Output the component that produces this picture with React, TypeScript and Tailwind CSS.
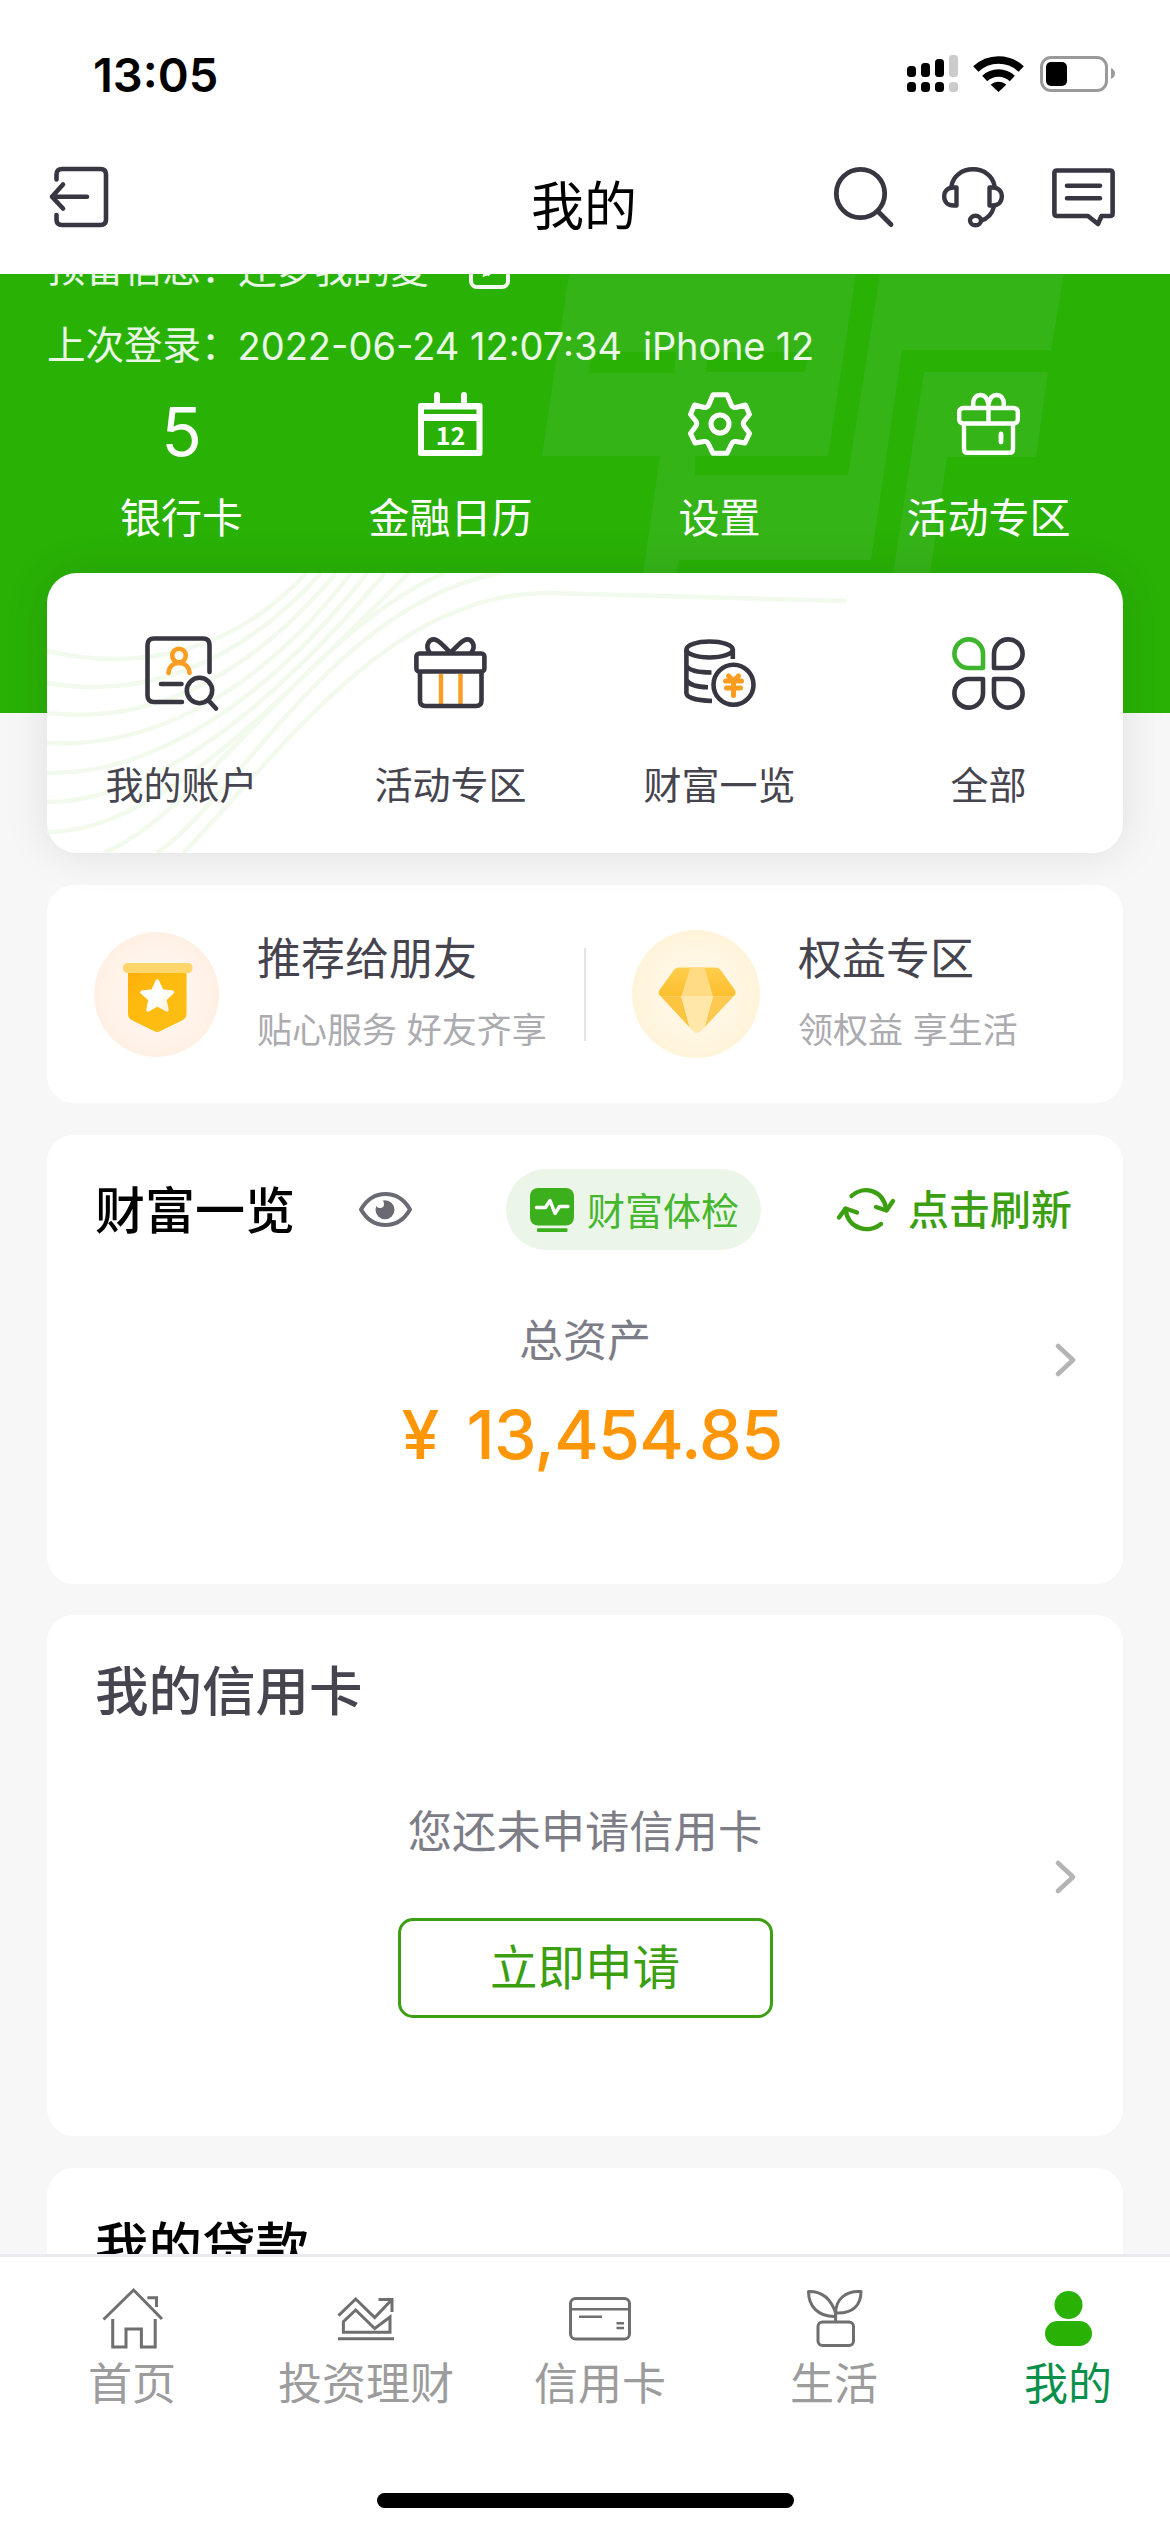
import React from 'react';

const ink = '#373641';
const orange = '#fa9d21';

function Svg({ w, h, children, stroke = 'none', sw = 5 }: { w: number; h: number; children: React.ReactNode; stroke?: string; sw?: number }) {
  return (
    <svg width={w} height={h} viewBox={`0 0 ${w} ${h}`} fill="none" stroke={stroke} strokeWidth={sw} strokeLinecap="round" strokeLinejoin="round" className="block shrink-0 overflow-visible">
      {children}
    </svg>
  );
}

/* Status bar and title bar icons */
const Signal = () => (
  <Svg w={51} h={38}>
    <g fill="#000">
      <rect x="0" y="11" width="9" height="11" rx="3.5" />
      <rect x="14" y="8" width="9" height="14" rx="3.5" />
      <rect x="28" y="4" width="9" height="18" rx="3.5" />
      <rect x="0" y="27" width="9" height="10" rx="3.5" />
      <rect x="14" y="27" width="9" height="10" rx="3.5" />
      <rect x="28" y="27" width="9" height="10" rx="3.5" />
    </g>
    <g fill="#cbcbcb">
      <rect x="42" y="0" width="9" height="22" rx="3.5" />
      <rect x="42" y="27" width="9" height="10" rx="3.5" />
    </g>
  </Svg>
);
const Wifi = () => (
  <svg width="49" height="36" viewBox="0 0 49 36" fill="none" stroke="#000" className="block overflow-visible">
    <path d="M1.8 13.1A33 33 0 0 1 47.2 13.1" strokeWidth="7.6" />
    <path d="M10.7 22.5A20 20 0 0 1 38.3 22.5" strokeWidth="7.4" />
    <path d="M24.5 36 16.7 28.8A11.3 11.3 0 0 1 32.3 28.8Z" fill="#000" stroke="none" />
  </svg>
);
const Battery = () => (
  <Svg w={75} h={36}>
    <rect x="1.5" y="1.5" width="65" height="33" rx="9.5" stroke="#9a9a9a" strokeWidth="3" />
    <rect x="6" y="6" width="21" height="24" rx="5" fill="#000" />
    <path d="M71 12Q75 14 75 17.500T71 23Z" fill="#9a9a9a" />
  </Svg>
);
const Logout = () => (
  <Svg w={60} h={62} stroke={ink} sw={4.6}>
    <path d="M7.500 13.500V8.500Q7.500 3 13 3H51.500Q57 3 57 8.500V53.500Q57 59 51.500 59H13Q7.500 59 7.500 53.500V49" />
    <path d="M38 30.700H3M14 18.500 3 30.700 14 42.500" />
  </Svg>
);
const Search = () => (
  <Svg w={60} h={60} stroke={ink} sw={4.8}>
    <circle cx="26.500" cy="26.500" r="24.200" />
    <path d="M44 44.500 57 57.500" />
  </Svg>
);
const Headset = () => (
  <Svg w={62} h={60} stroke={ink} sw={4.4}>
    <path d="M9.500 19C11 9 20 2.300 31 2.300S51 9 52.500 19" />
    <path d="M14.500 20.500V38.500H11.500C6 38.500 2.200 35 2.200 29.500S6 20.500 11.500 20.500Z" />
    <path d="M47.500 20.500V38.500H50.500C56 38.500 59.800 35 59.800 29.500S56 20.500 50.500 20.500Z" />
    <path d="M52 39.500Q49 51 39 53.500" />
    <ellipse cx="33.500" cy="53.500" rx="5.500" ry="4.800" />
  </Svg>
);
const Chat = () => (
  <Svg w={63} h={58} stroke={ink} sw={4.6}>
    <path d="M5 2.500H58Q60.600 2.500 60.600 5V45.500Q60.600 48 58 48H49.500L46 56 36 48H5Q2.400 48 2.400 45.500V5Q2.400 2.500 5 2.500Z" />
    <path d="M15 17.700H48M15 30.300H48" />
  </Svg>
);

/* Hero icons */
const Edit = () => (
  <Svg w={41} h={41} stroke="#f4fcf1" sw={4}>
    <rect x="2" y="2" width="37" height="37" rx="6" />
    <path d="M17 26 27 14" strokeWidth="7" strokeLinecap="butt" />
    <path d="M15.500 21.500 14 28.500 21 26Z" fill="#f4fcf1" strokeWidth="1" />
  </Svg>
);
const Calendar = () => (
  <Svg w={65} h={64}>
    <rect x="16" y="0" width="6" height="16" rx="3" fill="#fff" />
    <rect x="43" y="0" width="6" height="16" rx="3" fill="#fff" />
    <path fillRule="evenodd" fill="#fff" d="M2.500 11H62Q64.500 11 64.500 13.500V61.500Q64.500 64 62 64H2.500Q0 64 0 61.500V13.500Q0 11 2.500 11ZM6 17.500V22H58.500V17.500ZM6 29V58H58.500V29Z" />
    <text x="32.500" y="52.500" textAnchor="middle" fill="#fff" className="font-['Noto_Sans_CJK_SC',sans-serif] text-[25px] font-bold">12</text>
  </Svg>
);
const Gear = () => (
  <Svg w={64} h={64} stroke="#fff" sw={5}>
    <path d="M25 2.700H39L43.500 13.500Q45 16 48.500 15.200L57.500 13 61.500 22.500 56 29.300Q54.600 31.500 56 34L61.500 41.500 57 51 48 49.500Q45 49 43.500 52L39 61.300H25L20.500 52Q19 49 16 49.500L7 51 2.500 41.500 8 34Q9.400 31.500 8 29.300L2.500 22.500 6.500 13 15.500 15.200Q19 16 20.500 13.500Z" />
    <circle cx="32" cy="32" r="9" />
  </Svg>
);
const GiftBox = () => (
  <Svg w={63} h={62} stroke="#fff" sw={4.400}>
    <rect x="2.200" y="15" width="58.600" height="15.500" rx="4" />
    <path d="M7 31V56Q7 59.800 10.500 59.800H52.500Q56 59.800 56 56V31" />
    <path d="M31.500 15V30M16.500 14C15 6 19 2 23.500 2Q30 2 31.500 12Q33 2 39.500 2C44 2 48 6 46.500 14" />
    <path d="M44 41V49" strokeWidth="4.800" />
  </Svg>
);

/* Shortcut card icons */
const Account = () => (
  <Svg w={73} h={75} stroke={ink} sw={4.600}>
    <path d="M37 66H9Q2.500 66 2.500 59.500V9Q2.500 2.500 9 2.500H58Q64.500 2.500 64.500 9V36" />
    <path d="M16 48H36.500" />
    <circle cx="54.500" cy="54.500" r="12.700" />
    <path d="M64.500 65.500 71 72.500" />
    <g stroke={orange}>
      <circle cx="34" cy="19.500" r="6.800" />
      <path d="M23.500 37C24 30 28.500 27 34 27S44 30 44.500 37" />
    </g>
  </Svg>
);
const GiftOutline = () => (
  <Svg w={73} h={72} stroke={ink} sw={4.600}>
    <path d="M27 37V67M46.500 37V67" stroke={orange} strokeWidth="4.400" strokeLinecap="butt" />
    <rect x="2.400" y="16.500" width="68" height="18" rx="3" />
    <path d="M6 36V63.500Q6 69 11.500 69H62Q67.500 69 67.500 63.500V36" />
    <path d="M15.500 15.500C10.500 8 15.500 2.300 20 2.400C25 2.500 29 9 36.500 15.500C44 9 48 2.500 53 2.400C57.500 2.300 62.500 8 57.500 15.500" />
  </Svg>
);
const Coins = () => (
  <Svg w={72} h={69} stroke={ink} sw={4.600}>
    <ellipse cx="25.600" cy="10.500" rx="23.200" ry="8" />
    <path strokeLinecap="butt" d="M48.800 10.500V20M2.400 10.500V54C2.400 58.500 12 61.500 28 62M2.400 27C5 31 14 33.500 27.500 33.500M2.400 41C5 45.500 13 48 24 48.300" />
    <circle cx="49.500" cy="45.700" r="20" />
    <path stroke={orange} strokeWidth="5" d="M44.500 37 49.500 42 54.500 37M41.500 42H57.500M42.500 49H56.500M49.500 42V56.500" />
  </Svg>
);
const Clover = () => (
  <Svg w={73} h={73} stroke={ink} sw={4.600}>
    <path stroke="#3db52c" d="M31 31V17A14.300 14.300 0 1 0 16.700 31Z" />
    <path d="M42 31V17A14.300 14.300 0 1 1 56.300 31Z" />
    <path d="M31 42V56A14.300 14.300 0 1 1 16.700 42Z" />
    <path d="M42 42V56A14.300 14.300 0 1 0 56.300 42Z" />
  </Svg>
);

/* Promotion badges */
const FlagBadge = () => (
  <Svg w={125} h={125}>
    <defs>
      <radialGradient id="peach"><stop offset="0.6" stopColor="#fff4ec" /><stop offset="1" stopColor="#fff0e4" /></radialGradient>
      <linearGradient id="flag" x1="0" y1="0" x2="1" y2="1"><stop offset="0" stopColor="#ffad0a" /><stop offset="0.3" stopColor="#ffb90e" /><stop offset="1" stopColor="#fcbf14" /></linearGradient>
      <linearGradient id="star" x1="0" y1="0" x2="1" y2="1"><stop offset="0.5" stopColor="#ffffff" /><stop offset="1" stopColor="#fff0d0" /></linearGradient>
    </defs>
    <circle cx="62.500" cy="62.500" r="62.500" fill="url(#peach)" />
    <path d="M34 40H92.500V82Q92.500 86 89 88L66.500 99Q63 101 60 99L37.500 88Q34 86 34 82Z" fill="url(#flag)" />
    <rect x="29" y="31" width="69.500" height="10" rx="4.500" fill="#ffd66c" />
    <path d="M63.300 49 68 59 78.500 60.200 70.800 67.500 73 78 63.300 72.800 54 78 56 67.500 48 60.200 58.800 59Z" fill="url(#star)" stroke="url(#star)" strokeWidth="3.500" />
  </Svg>
);
const DiamondBadge = () => (
  <Svg w={128} h={128}>
    <defs>
      <radialGradient id="cream"><stop offset="0.6" stopColor="#fff7e3" /><stop offset="1" stopColor="#fff4da" /></radialGradient>
      <linearGradient id="gemTop" x1="0" y1="0" x2="0" y2="1"><stop offset="0" stopColor="#ffd155" /><stop offset="1" stopColor="#fdbf2e" /></linearGradient>
      <clipPath id="gem"><path d="M49 37.500H83Q87 37.500 89 40.500L102.800 60Q104.500 62.500 102.800 65L69 101Q65 105 61 101L27.500 65Q25.700 62.500 27.500 60L41.500 40.500Q43.500 37.500 47.500 37.500Z" /></clipPath>
    </defs>
    <circle cx="64" cy="64" r="64" fill="url(#cream)" />
    <g clipPath="url(#gem)">
      <rect x="20" y="30" width="90" height="36.300" fill="url(#gemTop)" />
      <path d="M58.600 37H72.400L81 66.300H49.300Z" fill="#ffdc83" />
      <path d="M20 66.300H49.300L60 106Z" fill="#fdc441" />
      <path d="M110 66.300H81L70 106Z" fill="#fdc950" />
      <path d="M49.300 66.300H81L70 106H60Z" fill="#ffe6a9" />
    </g>
  </Svg>
);

/* Wealth card icons */
const Eye = () => (
  <Svg w={53} h={35} stroke="#6a6a72" sw={4}>
    <path d="M2 17.500C8 7 16 2 26.500 2S45 7 51 17.500C45 28 37 33 26.500 33S8 28 2 17.500Z" />
    <circle cx="26" cy="17.800" r="9.500" fill="#6a6a72" stroke="none" />
    <circle cx="21" cy="12" r="4" fill="#fff" stroke="none" />
  </Svg>
);
const Pulse = () => (
  <Svg w={44} h={44}>
    <rect width="44" height="37.500" rx="8" fill="#3bb01c" />
    <rect x="7" y="40.300" width="30.500" height="3.700" rx="1" fill="#3bb01c" />
    <path d="M6.500 19.500H15.500L20 12.500 25 25.500 29.500 18.500H38" stroke="#fff" strokeWidth="3.400" />
  </Svg>
);
const Refresh = () => (
  <Svg w={58} h={43} stroke="#3c9f12" sw={4.400}>
    <path d="M14.500 8C26-2.500 46 1 49.500 22" />
    <path d="M39 19 49.500 22.500 56 13" />
    <path d="M44 36C32 46 11 41.500 8.500 21" />
    <path d="M2 29.500 8.500 20.500 20 24.500" />
  </Svg>
);
const Chevron = () => (
  <Svg w={21} h={34} stroke="#b4b4b4" sw={4.600}>
    <path d="M3 3 18 17 3 31" />
  </Svg>
);

/* Tab bar icons */
const tabStroke = '#6f6f6f';
const HomeIcon = () => (
  <svg width="59" height="60" viewBox="0 0 59 60" fill="none" stroke={tabStroke} strokeWidth="3" className="block overflow-visible">
    <path d="M.500 31.500 30.600 2 59 31M44.400 9.700H53.500V19M9.700 31V59H23V41H38.400V59H52.200V31" />
  </svg>
);
const InvestIcon = () => (
  <svg width="56" height="43" viewBox="0 0 56 43" fill="none" stroke={tabStroke} strokeWidth="3" className="block overflow-visible">
    <path d="M.500 18.700 17.700 2 36.700 20.500 53.500 3M40.500 2.500H54V15M5.400 35.200V24.700L17.700 13 36.700 31.500 52 20V35.200ZM0 41.700H56" />
  </svg>
);
const CardIcon = () => (
  <svg width="62" height="43" viewBox="0 0 62 43" fill="none" stroke={tabStroke} strokeWidth="3" className="block overflow-visible">
    <rect x="1.500" y="1.500" width="59" height="40.500" rx="5" />
    <path d="M1.500 12.200H60.500M10 19.800H33M47.500 26.200H55M47.500 31H55" strokeWidth="2.600" />
  </svg>
);
const PlantIcon = () => (
  <svg width="55" height="57" viewBox="0 0 55 57" fill="none" stroke={tabStroke} strokeWidth="3" strokeLinejoin="round" className="block overflow-visible">
    <rect x="11" y="32" width="35.500" height="23.500" rx="4.500" />
    <path d="M28.600 32V20M28.600 23C24 9 16 1 1.500 1.500C1.500 16 11 27 28.600 26.500M28.600 23C28.600 10 38 .500 54 1.500C54 15 46 24 28.600 23" />
  </svg>
);
const UserIcon = () => (
  <Svg w={47} h={55}>
    <circle cx="23.500" cy="14" r="14" fill="#29b106" />
    <rect x="0" y="30" width="47" height="25" rx="12.500" fill="#29b106" />
  </Svg>
);

const heroItems = [
  { icon: <span className="pt-[14px] text-[67px] leading-none">5</span>, label: '银行卡' },
  { icon: <Calendar />, label: '金融日历' },
  { icon: <Gear />, label: '设置' },
  { icon: <GiftBox />, label: '活动专区' },
];
const shortcuts = [
  { icon: <Account />, label: '我的账户' },
  { icon: <GiftOutline />, label: '活动专区' },
  { icon: <Coins />, label: '财富一览' },
  { icon: <Clover />, label: '全部' },
];
const tabs = [
  { icon: <HomeIcon />, label: '首页' },
  { icon: <InvestIcon />, label: '投资理财' },
  { icon: <CardIcon />, label: '信用卡' },
  { icon: <PlantIcon />, label: '生活' },
  { icon: <UserIcon />, label: '我的', active: true },
];

const HeroPattern = () => (
  <svg width="1170" height="439" viewBox="0 0 1170 439" fill="#35b418" className="absolute inset-0">
    <path fillRule="evenodd" d="M569 0H856L828 182H542ZM592 78H676L674 99H589ZM708 78H809L805 98H706Z" />
    <path d="M880 0H1064L1051 76H902L871 286H679L676 300H643L660 182H695V201H848Z" />
    <path d="M924 98H1048L1036 183H947L930 300H893Z" />
  </svg>
);
const CardWaves = () => (
  <svg width="1076" height="280" viewBox="0 0 1076 280" fill="none" stroke="#f1faec" strokeWidth="4.500" className="absolute inset-0">
    <path d="M0 78C60 92 170 98 259 0M0 110C80 124 180 105 274 0M0 140C90 150 190 118 289 0M0 170C95 175 205 130 304 0M0 200C100 202 215 135 320 0M0 229C105 229 220 140 338 0M0 259C110 259 230 130 362 0M57 280C160 235 260 60 397 0M110 280C190 225 290 30 453 0M136 280C230 185 340 20 500 20Q640 24 799 28" />
  </svg>
);

export default function App() {
  return (
    <div className="flex h-[2532px] w-[1170px] flex-col overflow-hidden bg-[#f7f7f7] font-['Inter','Noto_Sans_CJK_SC',sans-serif] leading-none">
      <header className="relative z-10 h-[274px] shrink-0 bg-white text-black">
        <div className="flex h-[148px] items-center pl-[93px] pr-[55px]">
          <span className="text-[47px] font-semibold">13:05</span>
          <div className="ml-auto flex items-center">
            <Signal />
            <div className="ml-4"><Wifi /></div>
            <div className="ml-[17px]"><Battery /></div>
          </div>
        </div>
        <div className="grid h-[98px] grid-cols-[1fr_auto_1fr] items-center pl-[49px] pr-[55px]">
          <Logout />
          <h1 className="ml-1 mt-5 text-[53px]">我的</h1>
          <div className="flex items-center justify-end gap-12">
            <Search />
            <Headset />
            <Chat />
          </div>
        </div>
      </header>

      <main className="min-h-0 flex-1 overflow-hidden">
        <section className="relative h-[439px] overflow-hidden bg-[#29b106]">
          <HeroPattern />
          <div className="relative -mt-11 text-white">
            <div className="flex h-[77px] items-center pl-[47px] text-[38.500px] text-white/90">
              <span>预留信息：</span>
              <span className="-ml-px text-[38px]">还梦我的夏</span>
              <div className="ml-10"><Edit /></div>
            </div>
            <div className="flex h-[77px] items-center whitespace-pre pl-[47px] text-[38.500px] text-white/90">
              <span>上次登录：</span>
              <span className="-ml-0.5 text-[38px]">2022-06-24 12:07:34</span>
              <span className="ml-[21px] text-[38px] tracking-[-0.2px]">iPhone 12</span>
            </div>
            <div className="mx-[47px] grid grid-cols-4">
              {heroItems.map((it) => (
                <div key={it.label} className="flex flex-col items-center">
                  <div className="flex h-20 items-center">{it.icon}</div>
                  <span className="mt-[34px] text-[41px]">{it.label}</span>
                </div>
              ))}
            </div>
          </div>
        </section>

        <div className="relative -mt-[140px] flex flex-col px-[47px]">
          <section className="relative h-[280px] rounded-[30px] bg-white shadow-[0_0_45px_rgba(0,0,0,0.1)]">
            <CardWaves />
            <div className="relative grid grid-cols-4 pt-[60px]">
              {shortcuts.map((it) => (
                <div key={it.label} className="flex flex-col items-center">
                  <div className="flex h-20 items-center">{it.icon}</div>
                  <span className="mt-[53px] text-[38px] text-[#45444f]">{it.label}</span>
                </div>
              ))}
            </div>
          </section>

          <section className="mt-8 flex h-[218px] items-center rounded-[27px] bg-white">
            <div className="flex w-[537px] items-center pl-[47px]">
              <FlagBadge />
              <div className="ml-[38px] flex flex-col gap-8 pb-[3px]">
                <span className="text-[44px] text-[#45444f]">推荐给朋友</span>
                <span className="text-[35px] text-[#ababb0]">贴心服务 好友齐享</span>
              </div>
            </div>
            <div className="h-[93px] w-[2px] bg-[#e4e4e6]" />
            <div className="flex items-center pl-[46px]">
              <DiamondBadge />
              <div className="ml-[38px] flex flex-col gap-8 pb-[3px]">
                <span className="text-[44px] text-[#45444f]">权益专区</span>
                <span className="text-[35px] text-[#ababb0]">领权益 享生活</span>
              </div>
            </div>
          </section>

          <section className="mt-8 h-[449px] rounded-[27px] bg-white pt-[34px]">
            <div className="flex h-[81px] items-center pl-12">
              <h2 className="mt-0.5 w-[204px] whitespace-nowrap text-[50px] font-medium text-black">财富一览</h2>
              <div className="ml-[60px]"><Eye /></div>
              <div className="ml-[94px] flex h-[81px] w-[255px] items-center rounded-full bg-[#ebf5e8] pl-6">
                <Pulse />
                <span className="ml-[13px] mt-0.5 text-[38px] text-[#45b72e]">财富体检</span>
              </div>
              <div className="ml-[76px]"><Refresh /></div>
              <span className="ml-[13px] mt-0.5 text-[41px] font-medium text-[#3c9f12]">点击刷新</span>
            </div>
            <div className="mt-[69px] flex items-start pl-[68px]">
              <div className="flex flex-1 flex-col items-center">
                <span className="text-[44px] text-[#7d7d87]">总资产</span>
                <span className="ml-[14px] mt-[37px] flex text-[68px] font-medium text-[#ff9608]">
                  <span>¥</span>
                  <span className="ml-[27px] tracking-[-0.75px]">13,454.85</span>
                </span>
              </div>
              <div className="mr-[47px] mt-6"><Chevron /></div>
            </div>
          </section>

          <section className="mt-[31px] h-[521px] rounded-[27px] bg-white pt-[50px]">
            <h2 className="pl-12 text-[53.500px] font-medium text-[#45444f]">我的信用卡</h2>
            <div className="mt-[91px] flex items-start pl-[68px]">
              <div className="flex flex-1 flex-col items-center">
                <span className="text-[44.300px] text-[#7d7d87]">您还未申请信用卡</span>
                <button className="mt-[64px] h-[100px] w-[375px] rounded-[15px] border-[3px] border-[#3c9f12] text-[47.500px] text-[#3c9f12]">立即申请</button>
              </div>
              <div className="mr-[47px] mt-[50px]"><Chevron /></div>
            </div>
          </section>

          <section className="mt-8 h-[300px] rounded-[27px] bg-white pt-[53px]">
            <h2 className="pl-12 text-[53.500px] font-medium text-black">我的贷款</h2>
          </section>
        </div>
      </main>

      <nav className="relative z-10 h-[278px] shrink-0 border-t-[3px] border-[#ebebef] bg-white">
        <div className="flex pl-[15px]">
          {tabs.map((t) => (
            <div key={t.label} className="flex w-[234px] shrink-0 flex-col items-center pt-[31px]">
              <div className="flex h-[60px] items-center">{t.icon}</div>
              <span className={t.active ? 'mt-[14px] text-[44px] text-[#0b904b]' : 'mt-[14px] text-[44px] text-[#9c9c9c]'}>{t.label}</span>
            </div>
          ))}
        </div>
        <div className="mx-auto mt-[87px] h-[15px] w-[417px] rounded-full bg-black" />
      </nav>
    </div>
  );
}
